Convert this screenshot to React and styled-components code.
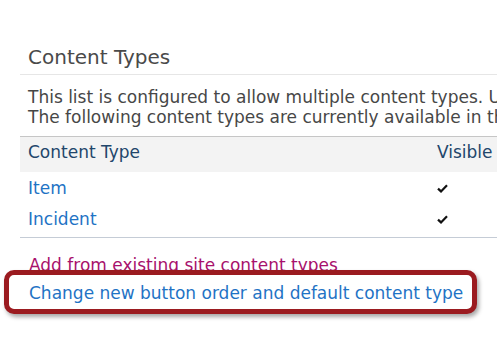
import React from "react";
import styled, { createGlobalStyle } from "styled-components";

const GlobalStyle = createGlobalStyle`
    body {
        margin: 0;
        background: #ffffff;
        overflow: hidden;
        font-family: "DejaVu Sans", Verdana, sans-serif;
    }
`;

const Page = styled.div`
    width: 497px;
    height: 356px;
    padding: 45px 0 0 20px;
    box-sizing: border-box;
    overflow: hidden;
`;

const Heading = styled.h2`
    margin: 0;
    padding: 0 0 5px 8px;
    font-size: 20px;
    font-weight: normal;
    line-height: 24px;
    color: #4a4a4a;
    border-bottom: 1px solid #e6e6e6;
    white-space: nowrap;
`;

const Description = styled.p`
    margin: 12px 0 9px;
    padding-left: 8px;
    font-size: 17px;
    line-height: 20px;
    color: #474747;
    white-space: nowrap;
`;

const TypeTable = styled.div`
    border-top: 1px solid #c6c6c6;
    border-bottom: 1px solid #c5ccd6;
    padding-bottom: 3px;
    width: 600px;
`;

const Row = styled.div`
    display: grid;
    grid-template-columns: 409px auto;
    background: ${(p) => (p.$header ? "#f3f3f3" : "transparent")};
    padding: ${(p) => (p.$header ? "5px 0 10px" : "6px 0 5px")};
    font-size: 17px;
    line-height: 20px;
    color: ${(p) => (p.$header ? "#22466b" : "#1f73c5")};
`;

const Cell = styled.div`
    padding: 0 8px;
    display: flex;
    align-items: center;
    white-space: nowrap;
`;

const Links = styled.div`
    margin-top: 17px;
    padding-left: 9px;
    font-size: 17px;
    line-height: 20px;
`;

const Link = styled.div`
    color: ${(p) => (p.$visited ? "#a8116c" : "#1f73c5")};
    white-space: nowrap;
`;

// red call-out drawn over the links area
const Highlight = styled.div`
    position: relative;
    width: 473px;
    margin: -5px 0 0 -25px;
    padding: 8px 0 6px 20px;
    box-sizing: border-box;
    border: 5px solid #9b1b20;
    border-radius: 10px;
    background: #ffffff;
    box-shadow: 2px 3px 4px rgba(0, 0, 0, 0.35);
`;

const Check = () => (
    <svg width="11" height="9" viewBox="0 0 11 9">
        <path
            d="M1 4.6 L4 7.4 L10 1.2"
            fill="none"
            stroke="#111"
            strokeWidth="2.2"
            strokeLinejoin="miter"
        />
    </svg>
);

const contentTypes = [
    { name: "Item", visible: true },
    { name: "Incident", visible: true },
];

const App = () => {
    return (
        <>
            <GlobalStyle />
            <Page>
                <Heading>Content Types</Heading>
                <Description>
                    This list is configured to allow multiple content types. Use content types to specify the information you want to display about an item.
                    <br />
                    The following content types are currently available in this list:
                </Description>
                <TypeTable>
                    <Row $header>
                        <Cell>Content Type</Cell>
                        <Cell>Visible on New Button</Cell>
                    </Row>
                    {contentTypes.map((item) => (
                        <Row key={item.name}>
                            <Cell>{item.name}</Cell>
                            <Cell>{item.visible && <Check />}</Cell>
                        </Row>
                    ))}
                </TypeTable>
                <Links>
                    <Link $visited>Add from existing site content types</Link>
                    <Highlight>
                        <Link>Change new button order and default content type</Link>
                    </Highlight>
                </Links>
            </Page>
        </>
    );
};

export default App;
